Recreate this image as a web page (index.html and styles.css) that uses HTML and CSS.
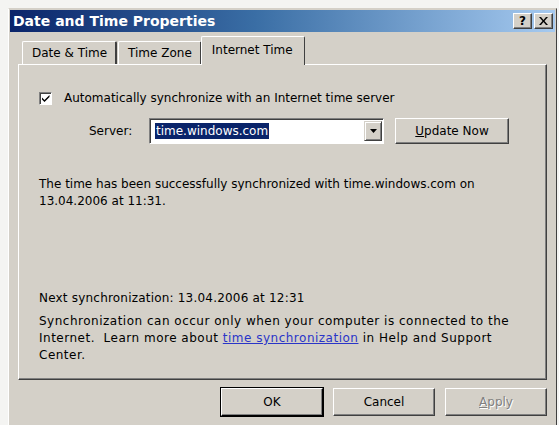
FILE: index.html
```html
<!DOCTYPE html>
<html lang="en">
<head>
    <meta charset="UTF-8">
    <title>Date and Time Properties</title>
    <link rel="stylesheet" href="styles.css">
</head>
<body>
    <div class="window">
        <div class="title-bar">
            <span class="title">Date and Time Properties</span>
            <div class="title-buttons">
                <button class="cap-btn help">?</button>
                <button class="cap-btn close">
                    <svg width="9" height="8" viewBox="0 0 9 8"><path d="M0 0h2l2.5 3 2.5-3h2l-3.5 4 3.5 4h-2l-2.5-3-2.5 3h-2l3.5-4z" fill="#000"/></svg>
                </button>
            </div>
        </div>

        <div class="dialog-body">
            <div class="tabs">
                <div class="tab">Date &amp; Time</div>
                <div class="tab">Time Zone</div>
                <div class="tab active">Internet Time</div>
            </div>

            <div class="panel">
                <label class="check-row">
                    <span class="checkbox">
                        <svg width="9" height="9" viewBox="0 0 9 9"><path d="M1 3.5l2.5 2.5 5-5v2l-5 5-2.5-2.5z" fill="#000"/></svg>
                    </span>
                    Automatically synchronize with an Internet time server
                </label>

                <div class="server-row">
                    <span class="server-label">Server:</span>
                    <div class="combo">
                        <span class="combo-text"><span class="selected">time.windows.com</span></span>
                        <span class="combo-arrow">
                            <svg width="7" height="4" viewBox="0 0 7 4"><path d="M0 0h7l-3.5 4z" fill="#000"/></svg>
                        </span>
                    </div>
                    <button class="btn update"><u>U</u>pdate Now</button>
                </div>

                <p class="status">The time has been successfully synchronized with time.windows.com on 13.04.2006 at 11:31.</p>

                <p class="next">Next synchronization: 13.04.2006 at 12:31</p>
                <p class="note">Synchronization can occur only when your computer is connected to the Internet.&nbsp; Learn more about <a href="#">time synchronization</a> in Help and Support Center.</p>
            </div>

            <div class="actions">
                <button class="btn default">OK</button>
                <button class="btn">Cancel</button>
                <button class="btn" disabled><u>A</u>pply</button>
            </div>
        </div>
    </div>
</body>
</html>
```

FILE: styles.css
```css
:root {
    --face: #d4d0c8;
    --shadow: #808080;
    --dark: #404040;
    --light: #ffffff;
}

body {
    margin: 0;
    background: #f4f4f2;
    font-family: "DejaVu Sans", Verdana, sans-serif;
    font-size: 12px;
    color: #000;
    overflow: hidden;
}

.window {
    margin: 8px 2px 0 8px;
    height: 430px;
    background: var(--face);
    border-top: 1px solid var(--face);
    border-left: 1px solid var(--light);
    border-right: 1px solid var(--dark);
    padding: 1px;
}

.title-bar {
    height: 22px;
    display: flex;
    align-items: center;
    justify-content: space-between;
    padding: 0 2px 0 3px;
    background: linear-gradient(to right, #0a246a, #3a6ea5 45%, #a6caf0);
}

.title {
    color: #fff;
    font-weight: bold;
    font-size: 14px;
}

.title-buttons {
    display: flex;
    gap: 2px;
}

.cap-btn {
    width: 19px;
    height: 16px;
    padding: 0;
    display: flex;
    align-items: center;
    justify-content: center;
    background: var(--face);
    border: 1px solid;
    border-color: var(--light) var(--dark) var(--dark) var(--light);
    box-shadow: inset -1px -1px 0 var(--shadow);
    font-family: "DejaVu Sans", sans-serif;
    font-weight: bold;
    font-size: 12px;
    line-height: 1;
}

.dialog-body {
    padding: 6px 8px 0 8px;
}

.tabs {
    display: flex;
    align-items: flex-end;
    height: 26px;
    padding-left: 4px;
}

.tab {
    height: 22px;
    padding: 0 8px 0 9px;
    display: flex;
    align-items: center;
    border-top: 1px solid var(--light);
    border-left: 1px solid var(--light);
    border-right: 2px solid var(--dark);
    border-radius: 2px 2px 0 0;
    margin-right: 1px;
}

.tab.active {
    height: 25px;
    margin: 0 0 -1px -2px;
    padding: 0 11px 3px 10px;
    border-right: 1px solid var(--dark);
    background: var(--face);
    position: relative;
    z-index: 1;
}

.panel {
    height: 289px;
    padding: 25px 20px 0 20px;
    border: 1px solid;
    border-color: var(--light) var(--dark) var(--dark) var(--light);
    box-shadow: inset -1px -1px 0 var(--shadow);
}

.check-row {
    display: flex;
    align-items: center;
    gap: 12px;
    height: 16px;
}

.checkbox {
    width: 9px;
    height: 9px;
    padding: 1px;
    display: flex;
    background: #fff;
    border: 1px solid;
    border-color: var(--shadow) var(--light) var(--light) var(--shadow);
    box-shadow: inset 1px 1px 0 var(--dark);
}

.server-row {
    display: flex;
    align-items: center;
    margin: 12px 0 0 50px;
    height: 26px;
}

.server-label {
    width: 60px;
}

.combo {
    width: 230px;
    height: 22px;
    display: flex;
    align-items: center;
    background: #fff;
    border: 1px solid;
    border-color: var(--shadow) var(--light) var(--light) var(--shadow);
    box-shadow: inset 1px 1px 0 var(--dark);
    padding: 1px 1px 1px 2px;
}

.combo-text {
    flex: 1;
    padding-left: 3px;
}

.selected {
    background: #0a246a;
    color: #fff;
    padding: 1px 1px;
}

.combo-arrow {
    width: 18px;
    height: 20px;
    display: flex;
    align-items: center;
    justify-content: center;
    background: var(--face);
    border: 1px solid;
    border-color: var(--face) var(--dark) var(--dark) var(--face);
    box-shadow: inset 1px 1px 0 var(--light), inset -1px -1px 0 var(--shadow);
    box-sizing: border-box;
}

.btn {
    width: 102px;
    height: 28px;
    padding: 0;
    background: var(--face);
    border: 1px solid;
    border-color: var(--light) var(--dark) var(--dark) var(--light);
    box-shadow: inset -1px -1px 0 var(--shadow);
    font-family: inherit;
    font-size: inherit;
    color: #000;
}

.btn.update {
    width: 114px;
    height: 26px;
    margin-left: 11px;
}

.btn.default {
    outline: 1px solid #000;
    outline-offset: 0;
    border-color: var(--light) #000 #000 var(--light);
}

.btn:disabled {
    color: var(--shadow);
    text-shadow: 1px 1px 0 var(--light);
}

.status {
    margin: 32px 0 0 0;
    line-height: 17px;
    width: 450px;
}

.next {
    margin: 80px 0 0 0;
    line-height: 17px;
    letter-spacing: 0.2px;
}

.note {
    margin: 6px 0 0 0;
    line-height: 17px;
    width: 490px;
    letter-spacing: 0.5px;
}

.note a {
    color: #2a35c8;
}

.actions {
    display: flex;
    justify-content: flex-end;
    gap: 10px;
    margin-top: 8px;
}
```
